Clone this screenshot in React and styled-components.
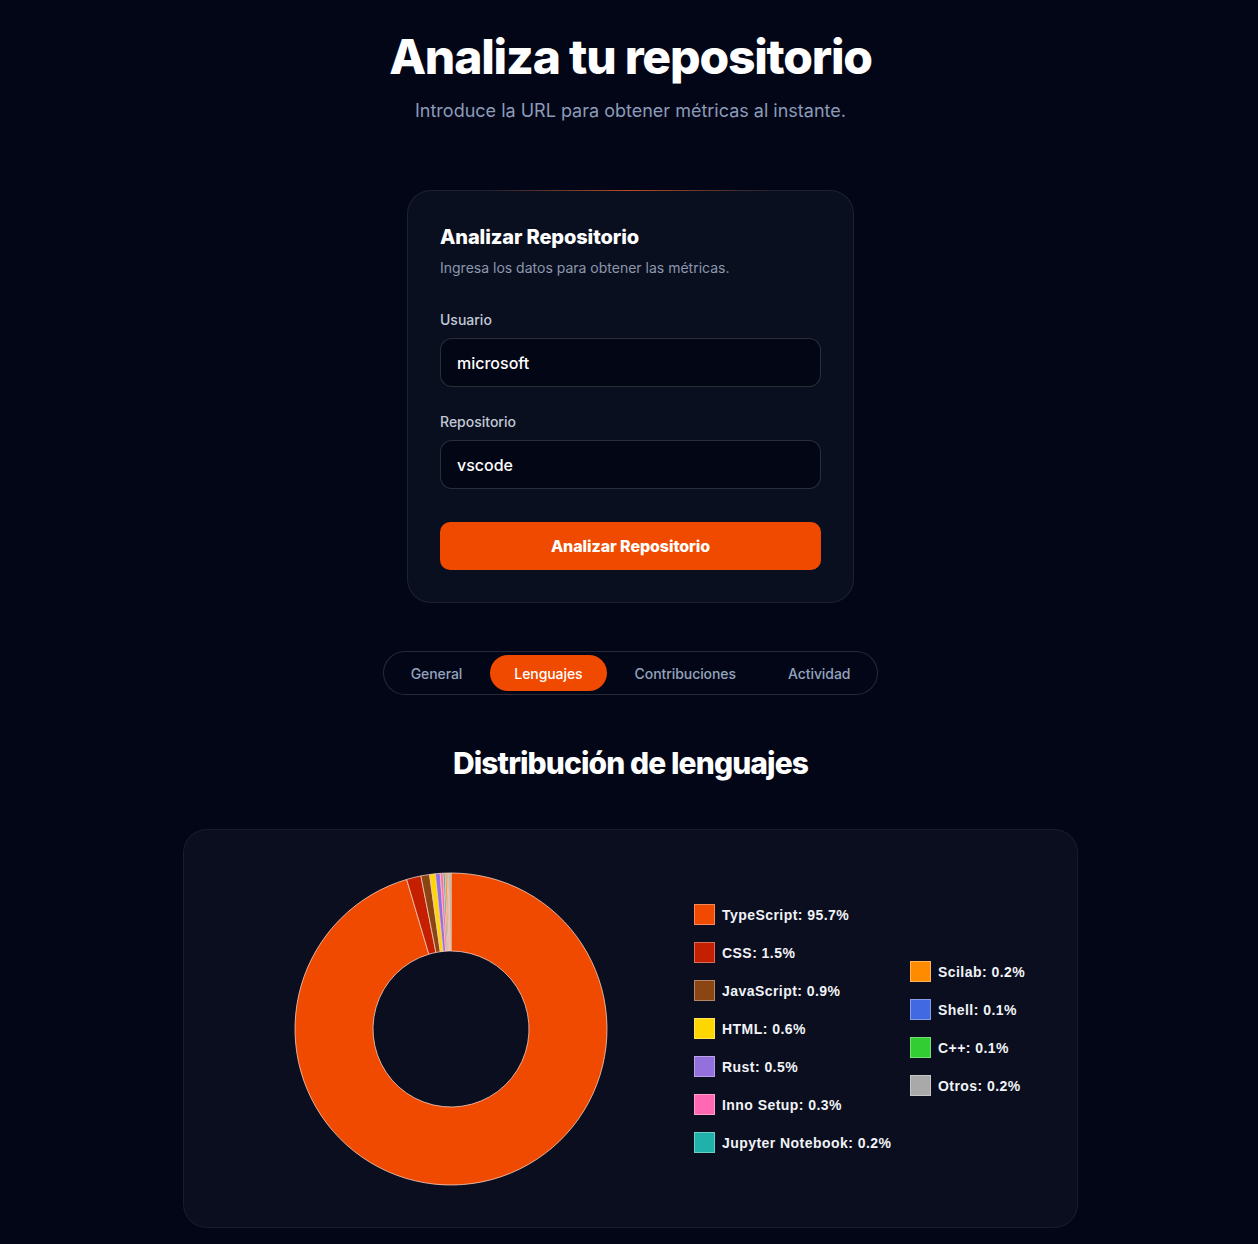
import React from "react";
import styled, { createGlobalStyle } from "styled-components";

const GlobalStyle = createGlobalStyle`
  * { box-sizing: border-box; }
  html, body { margin: 0; padding: 0; background: #030617; }
  body { font-family: Inter, "Noto Sans", sans-serif; color: #f8fafc; }
`;

const Page = styled.main`
  min-height: 1244px;
  display: flex;
  flex-direction: column;
  align-items: center;
  padding: 28px 0 16px 3px;
  background: #030617;
`;

const Title = styled.h1`
  margin: 0;
  font-size: 48px;
  line-height: 58px;
  font-weight: 800;
  letter-spacing: -0.025em;
  color: #ffffff;
`;

const Subtitle = styled.p`
  margin: 11px 0 0;
  font-size: 18px;
  line-height: 28px;
  color: #8b9bb8;
`;

const FormCard = styled.section`
  position: relative;
  margin-top: 65px;
  width: 447px;
  padding: 32px;
  border-radius: 24px;
  background: #0a0f1f;
  border: 1px solid rgba(255, 255, 255, 0.08);
  &::before {
    content: "";
    position: absolute;
    top: -1px;
    left: 18%;
    right: 18%;
    height: 1px;
    background: linear-gradient(90deg, transparent, rgba(240, 90, 30, 0.75), transparent);
  }
`;

const CardTitle = styled.h2`
  margin: 0;
  font-size: 20px;
  line-height: 28px;
  font-weight: 800;
  letter-spacing: -0.005em;
  color: #ffffff;
`;

const CardDesc = styled.p`
  margin: 7px 0 0;
  font-size: 14px;
  line-height: 20px;
  color: #8b97ad;
`;

const Field = styled.div`
  display: flex;
  flex-direction: column;
  gap: 8px;
  margin-top: ${(p) => p.$top}px;
`;

const Label = styled.label`
  font-size: 14px;
  line-height: 20px;
  font-weight: 500;
  color: #c2c9d6;
`;

const Input = styled.input`
  width: 100%;
  height: 49px;
  padding: 0 16px;
  border-radius: 12px;
  border: 1px solid rgba(255, 255, 255, 0.16);
  background: #030614;
  color: #ffffff;
  font-family: Inter, sans-serif;
  font-size: 16px;
  font-weight: 500;
  outline: none;
`;

const SubmitButton = styled.button`
  margin-top: 33px;
  width: 100%;
  height: 48px;
  border: none;
  border-radius: 10px;
  background: #f04a00;
  color: #ffffff;
  font-family: Inter, sans-serif;
  font-size: 16px;
  font-weight: 800;
  letter-spacing: -0.005em;
  cursor: pointer;
`;

const Tabs = styled.nav`
  margin-top: 48px;
  display: flex;
  gap: 4px;
  padding: 3px;
  border-radius: 999px;
  border: 1px solid rgba(255, 255, 255, 0.14);
  background: #030617;
`;

const Tab = styled.button`
  height: 36px;
  padding: 0 24px;
  border: none;
  border-radius: 999px;
  background: ${(p) => (p.$active ? "#f04a00" : "transparent")};
  color: ${(p) => (p.$active ? "#ffffff" : "#94a3bd")};
  font-family: Inter, sans-serif;
  font-size: 14px;
  font-weight: 500;
  letter-spacing: -0.005em;
  cursor: pointer;
`;

const SectionTitle = styled.h2`
  margin: 50px 0 0;
  font-size: 30px;
  line-height: 36px;
  font-weight: 800;
  letter-spacing: -0.03em;
  color: #ffffff;
`;

const ChartCard = styled.section`
  margin-top: 48px;
  width: 895px;
  height: 399px;
  border-radius: 24px;
  background: #0a0e1f;
  border: 1px solid rgba(255, 255, 255, 0.06);
  display: flex;
  align-items: center;
  padding-left: 110px;
`;

const Donut = styled.svg`
  flex: none;
  display: block;
`;

const Legend = styled.div`
  margin-left: 86px;
  display: flex;
  align-items: center;
`;

const LegendColumn = styled.ul`
  list-style: none;
  margin: 0;
  padding: 0;
  width: ${(p) => p.$width}px;
  display: flex;
  flex-direction: column;
  gap: 18px;
`;

const LegendItem = styled.li`
  display: flex;
  align-items: center;
  gap: 7px;
  height: 20px;
  font-family: "Liberation Sans", Arial, sans-serif;
  font-size: 14px;
  font-weight: 700;
  letter-spacing: 0.45px;
  color: #f1f3f7;
  white-space: nowrap;
`;

const Swatch = styled.span`
  width: 21px;
  height: 21px;
  flex: none;
  background: ${(p) => p.$color};
  border: 1px solid rgba(255, 255, 255, 0.35);
`;

const languages = [
  { name: "TypeScript", value: 95.7, color: "#f04a00" },
  { name: "CSS", value: 1.5, color: "#c41f00" },
  { name: "JavaScript", value: 0.9, color: "#8b4513" },
  { name: "HTML", value: 0.6, color: "#ffd700" },
  { name: "Rust", value: 0.5, color: "#9370db" },
  { name: "Inno Setup", value: 0.3, color: "#ff69b4" },
  { name: "Jupyter Notebook", value: 0.2, color: "#20b2aa" },
  { name: "Scilab", value: 0.2, color: "#ff8c00" },
  { name: "Shell", value: 0.1, color: "#4169e1" },
  { name: "C++", value: 0.1, color: "#32cd32" },
  { name: "Otros", value: 0.2, color: "#a9a9a9" },
];

function arcPath(cx, cy, R, r, a0, a1) {
  const p = (rad, a) => [cx + rad * Math.cos(a), cy + rad * Math.sin(a)];
  const large = a1 - a0 > Math.PI ? 1 : 0;
  const [x0, y0] = p(R, a0);
  const [x1, y1] = p(R, a1);
  const [x2, y2] = p(r, a1);
  const [x3, y3] = p(r, a0);
  return `M${x0} ${y0} A${R} ${R} 0 ${large} 1 ${x1} ${y1} L${x2} ${y2} A${r} ${r} 0 ${large} 0 ${x3} ${y3} Z`;
}

function DonutChart() {
  const total = languages.reduce((s, l) => s + l.value, 0);
  const size = 314;
  const c = size / 2;
  let angle = -Math.PI / 2;
  return (
    <Donut width={size} height={size} viewBox={`0 0 ${size} ${size}`}>
      {languages.map((l) => {
        const a0 = angle;
        const a1 = angle + (l.value / total) * Math.PI * 2;
        angle = a1;
        return (
          <path
            key={l.name}
            d={arcPath(c, c, 156, 78, a0, a1)}
            fill={l.color}
            stroke="rgba(245, 205, 190, 0.8)"
            strokeWidth="1"
          />
        );
      })}
    </Donut>
  );
}

export default function App() {
  const first = languages.slice(0, 7);
  const second = languages.slice(7);
  return (
    <>
      <GlobalStyle />
      <Page>
        <Title>Analiza tu repositorio</Title>
        <Subtitle>Introduce la URL para obtener métricas al instante.</Subtitle>

        <FormCard>
          <CardTitle>Analizar Repositorio</CardTitle>
          <CardDesc>Ingresa los datos para obtener las métricas.</CardDesc>
          <Field $top={32}>
            <Label htmlFor="user">Usuario</Label>
            <Input id="user" defaultValue="microsoft" />
          </Field>
          <Field $top={25}>
            <Label htmlFor="repo">Repositorio</Label>
            <Input id="repo" defaultValue="vscode" />
          </Field>
          <SubmitButton>Analizar Repositorio</SubmitButton>
        </FormCard>

        <Tabs>
          <Tab>General</Tab>
          <Tab $active>Lenguajes</Tab>
          <Tab>Contribuciones</Tab>
          <Tab>Actividad</Tab>
        </Tabs>

        <SectionTitle>Distribución de lenguajes</SectionTitle>

        <ChartCard>
          <DonutChart />
          <Legend>
            <LegendColumn $width={216}>
              {first.map((l) => (
                <LegendItem key={l.name}>
                  <Swatch $color={l.color} />
                  {l.name}: {l.value}%
                </LegendItem>
              ))}
            </LegendColumn>
            <LegendColumn $width={160}>
              {second.map((l) => (
                <LegendItem key={l.name}>
                  <Swatch $color={l.color} />
                  {l.name}: {l.value}%
                </LegendItem>
              ))}
            </LegendColumn>
          </Legend>
        </ChartCard>
      </Page>
    </>
  );
}
